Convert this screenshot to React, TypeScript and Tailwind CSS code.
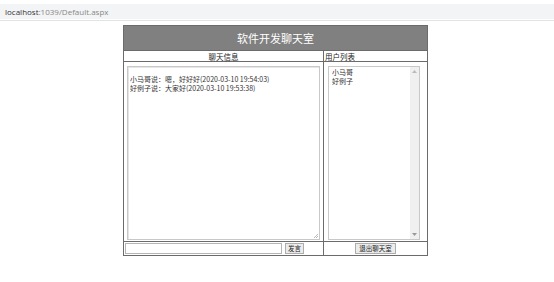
export default function App() {
  const cjk = { fontFamily: '"Noto Sans CJK SC", "Noto Sans", sans-serif' };
  return (
    <div className="w-[554px] h-[282px] bg-white overflow-hidden" style={cjk}>
      {/* browser address bar */}
      <div className="h-[21px] pt-[4px] border-b border-[#e3e3e3]">
        <div className="h-[15px] bg-[#f3f4f5] flex items-center pl-[5px] text-[8px] leading-none" style={{ fontFamily: '"Open Sans", "Liberation Sans", sans-serif' }}>
          <span className="text-[#333]">localhost</span>
          <span className="text-[#888]">:1039/Default.aspx</span>
        </div>
      </div>

      {/* chat table */}
      <div className="w-[305px] ml-[123px] mt-[4px] border border-[#6b6b6b] flex flex-col">
        <div className="h-[25px] bg-[#808080] border-b border-[#6b6b6b] flex items-center justify-center text-white text-[11px] leading-none">
          软件开发聊天室
        </div>

        <div className="flex h-[11px] border-b border-[#6b6b6b] text-[7.5px] leading-[11px] text-[#222]">
          <div className="w-[199px] text-center">聊天信息</div>
          <div className="border-l border-[#6b6b6b] flex-1 pl-[1px]">用户列表</div>
        </div>

        <div className="flex h-[180px] border-b border-[#6b6b6b]">
          <div className="w-[199px] px-[3px] pt-[4px] pb-[1px]">
            <div className="relative h-full border border-[#c8c8c8] shadow-[inset_1px_1px_0_#e5e5e5] pl-[2px] pt-[8px] text-[7px] leading-[8.5px] text-[#333]">
              <div>小马哥说：嗯，好好好(2020-03-10 19:54:03)</div>
              <div>好例子说：大家好(2020-03-10 19:53:38)</div>
              <svg className="absolute right-[1px] bottom-[1px]" width="5" height="5" viewBox="0 0 5 5">
                <path d="M1 5 L5 1 M3 5 L5 3" stroke="#aaa" strokeWidth="0.8" />
              </svg>
            </div>
          </div>
          <div className="flex-1 border-l border-[#6b6b6b] pl-[4px] pr-[7px] pt-[4px] pb-[1px]">
            <div className="h-full border border-[#c8c8c8] flex">
              <div className="flex-1 pl-[3px] pt-[1px] text-[7px] leading-[9px] text-[#333]">
                <div>小马哥</div>
                <div>好例子</div>
              </div>
              <div className="w-[9px] bg-[#f0f0f0] flex flex-col justify-between items-center py-[2px]">
                <svg width="5" height="4" viewBox="0 0 5 4"><path d="M0 4 L2.5 1 L5 4 Z" fill="#bbb" /></svg>
                <svg width="5" height="4" viewBox="0 0 5 4"><path d="M0 0 L2.5 3 L5 0 Z" fill="#999" /></svg>
              </div>
            </div>
          </div>
        </div>

        <div className="flex h-[13px]">
          <div className="w-[199px] flex items-center pl-[1px] gap-[3px]">
            <div className="w-[157px] h-[11px] border border-[#b5b5b5] bg-white" />
            <button className="h-[11px] w-[19px] border border-[#adadad] bg-[#ececec] text-[6.5px] leading-none text-[#222] flex items-center justify-center">
              发言
            </button>
          </div>
          <div className="flex-1 border-l border-[#6b6b6b] flex items-center justify-center">
            <button className="h-[11px] w-[41px] border border-[#adadad] bg-[#ececec] text-[6.5px] leading-none text-[#222] flex items-center justify-center">
              退出聊天室
            </button>
          </div>
        </div>
      </div>
    </div>
  );
}
